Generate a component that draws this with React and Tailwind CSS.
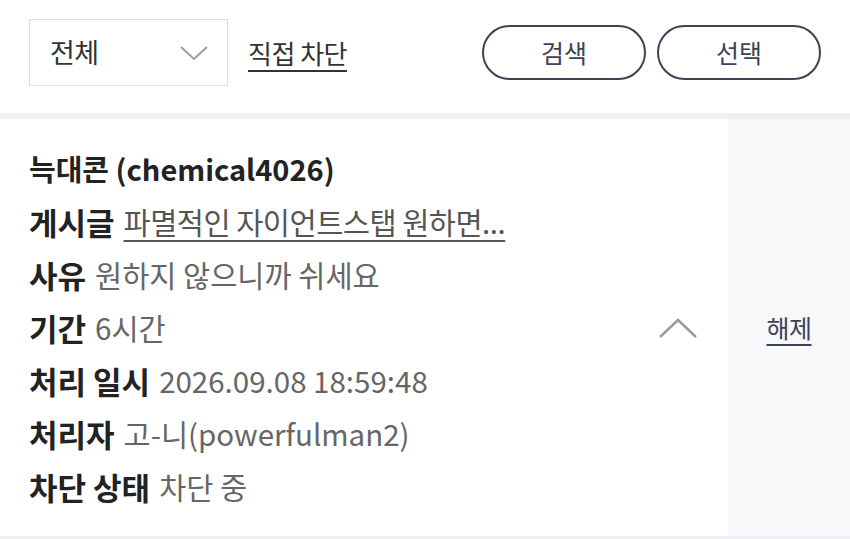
const rows = [
  { label: "게시글", value: "파멸적인 자이언트스탭 원하면...", link: true },
  { label: "사유", value: "원하지 않으니까 쉬세요" },
  { label: "기간", value: "6시간" },
  { label: "처리 일시", value: "2026.09.08 18:59:48" },
  { label: "처리자", value: "고-니(powerfulman2)" },
  { label: "차단 상태", value: "차단 중" },
]

const App = () => {
  return (
    <div className="h-[539px] w-[850px] overflow-hidden bg-white font-['Noto_Sans_CJK_KR',sans-serif]">
      <div className="flex h-[113px] items-center px-[29px] pb-[8px]">
        <div className="flex h-[67px] w-[199px] items-center justify-between border border-[#dcdde0] pl-[20px] pr-[18px]">
          <span className="text-[27px] tracking-[-0.5px] text-[#333]">전체</span>
          <svg width="30" height="16" viewBox="0 0 30 16" fill="none">
            <path d="M2 2 L15 14 L28 2" stroke="#9a9ca2" strokeWidth="2" />
          </svg>
        </div>
        <a className="ml-[20px] text-[26px] tracking-[-0.5px] text-[#333] underline underline-offset-[6px]">직접 차단</a>
        <div className="ml-auto flex gap-[11px]">
          <button className="h-[55px] w-[164px] rounded-full border-2 border-[#3d4256] text-[25px] text-[#3d4256]">
            검색
          </button>
          <button className="h-[55px] w-[164px] rounded-full border-2 border-[#3d4256] text-[25px] text-[#3d4256]">
            선택
          </button>
        </div>
      </div>
      <div className="h-[6px] bg-[#eef0f3]"></div>
      <div className="flex h-[417px]">
        <div className="flex flex-1 items-center">
          <div className="flex-1 pl-[29px]">
            <div className="h-[53px] text-[29px] font-bold leading-[53px] text-[#222]">늑대콘 (chemical4026)</div>
            {rows.map((row, index) => (
              <div key={index} className="flex h-[53px] items-center whitespace-nowrap leading-[53px]">
                <span className="text-[31px] font-bold text-[#222]">{row.label}</span>
                <span
                  className={
                    row.link
                      ? "ml-[9px] text-[29.5px] tracking-[-0.5px] text-[#555] underline underline-offset-[6px]"
                      : "ml-[9px] text-[29.5px] text-[#666]"
                  }
                >
                  {row.value}
                </span>
              </div>
            ))}
          </div>
          <svg className="mr-[30px] shrink-0" width="40" height="22" viewBox="0 0 40 22" fill="none">
            <path d="M2 20 L20 3 L38 20" stroke="#9a9a9a" strokeWidth="2.5" />
          </svg>
        </div>
        <div className="flex w-[122px] items-center justify-center bg-[#f7f8fa]">
          <a className="text-[25px] tracking-[-0.5px] text-[#3d4256] underline underline-offset-[6px]">해제</a>
        </div>
      </div>
      <div className="h-[3px] bg-[#eef0f3]"></div>
    </div>
  )
}

export default App
